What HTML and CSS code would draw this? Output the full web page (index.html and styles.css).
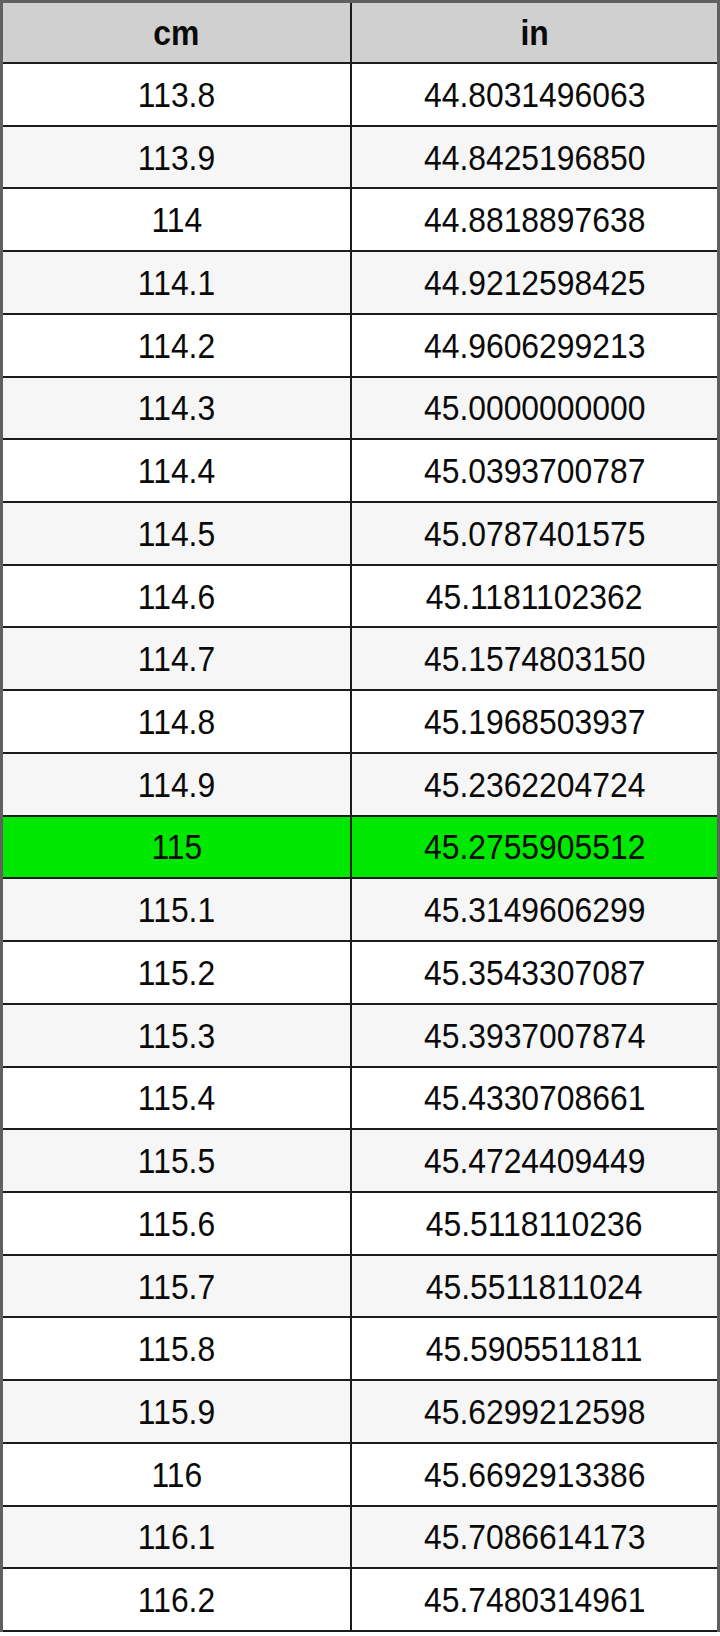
FILE: index.html
```html
<!DOCTYPE html>
<html>
<head>
<meta charset="utf-8">
<link rel="stylesheet" href="styles.css">
</head>
<body>
<div class="table">
  <div class="row head"><div class="cell"><span>cm</span></div><div class="cell"><span>in</span></div></div>
  <div class="row"><div class="cell"><span>113.8</span></div><div class="cell"><span>44.8031496063</span></div></div>
  <div class="row alt"><div class="cell"><span>113.9</span></div><div class="cell"><span>44.8425196850</span></div></div>
  <div class="row"><div class="cell"><span>114</span></div><div class="cell"><span>44.8818897638</span></div></div>
  <div class="row alt"><div class="cell"><span>114.1</span></div><div class="cell"><span>44.9212598425</span></div></div>
  <div class="row"><div class="cell"><span>114.2</span></div><div class="cell"><span>44.9606299213</span></div></div>
  <div class="row alt"><div class="cell"><span>114.3</span></div><div class="cell"><span>45.0000000000</span></div></div>
  <div class="row"><div class="cell"><span>114.4</span></div><div class="cell"><span>45.0393700787</span></div></div>
  <div class="row alt"><div class="cell"><span>114.5</span></div><div class="cell"><span>45.0787401575</span></div></div>
  <div class="row"><div class="cell"><span>114.6</span></div><div class="cell"><span>45.1181102362</span></div></div>
  <div class="row alt"><div class="cell"><span>114.7</span></div><div class="cell"><span>45.1574803150</span></div></div>
  <div class="row"><div class="cell"><span>114.8</span></div><div class="cell"><span>45.1968503937</span></div></div>
  <div class="row alt"><div class="cell"><span>114.9</span></div><div class="cell"><span>45.2362204724</span></div></div>
  <div class="row hl"><div class="cell"><span>115</span></div><div class="cell"><span>45.2755905512</span></div></div>
  <div class="row alt"><div class="cell"><span>115.1</span></div><div class="cell"><span>45.3149606299</span></div></div>
  <div class="row"><div class="cell"><span>115.2</span></div><div class="cell"><span>45.3543307087</span></div></div>
  <div class="row alt"><div class="cell"><span>115.3</span></div><div class="cell"><span>45.3937007874</span></div></div>
  <div class="row"><div class="cell"><span>115.4</span></div><div class="cell"><span>45.4330708661</span></div></div>
  <div class="row alt"><div class="cell"><span>115.5</span></div><div class="cell"><span>45.4724409449</span></div></div>
  <div class="row"><div class="cell"><span>115.6</span></div><div class="cell"><span>45.5118110236</span></div></div>
  <div class="row alt"><div class="cell"><span>115.7</span></div><div class="cell"><span>45.5511811024</span></div></div>
  <div class="row"><div class="cell"><span>115.8</span></div><div class="cell"><span>45.5905511811</span></div></div>
  <div class="row alt"><div class="cell"><span>115.9</span></div><div class="cell"><span>45.6299212598</span></div></div>
  <div class="row"><div class="cell"><span>116</span></div><div class="cell"><span>45.6692913386</span></div></div>
  <div class="row alt"><div class="cell"><span>116.1</span></div><div class="cell"><span>45.7086614173</span></div></div>
  <div class="row"><div class="cell"><span>116.2</span></div><div class="cell"><span>45.7480314961</span></div></div>
</div>
</body>
</html>
```

FILE: styles.css
```css
html, body {
  margin: 0;
  padding: 0;
  background: #ffffff;
}
.table {
  width: 720px;
  box-sizing: border-box;
  border: 3px solid #606060;
  border-bottom: none;
  display: grid;
  grid-template-rows: 61px repeat(25, 62.72px);
  font-family: "Liberation Sans", Arial, sans-serif;
  font-size: 35px;
  color: #0a0a0a;
}
.row {
  display: grid;
  grid-template-columns: 349px 1fr;
  box-sizing: border-box;
  border-bottom: 2px solid #1c1c1c;
  background: #ffffff;
}
.row.alt {
  background: #f6f6f6;
}
.row.head {
  background: #d0d0d0;
  font-weight: bold;
}
.row.hl {
  background: #00e800;
}
.cell {
  display: flex;
  align-items: center;
  justify-content: center;
}
.cell:first-child {
  border-right: 2px solid #1c1c1c;
}
.cell span {
  display: inline-block;
  transform: scaleX(0.91);
  line-height: 1;
}
```
